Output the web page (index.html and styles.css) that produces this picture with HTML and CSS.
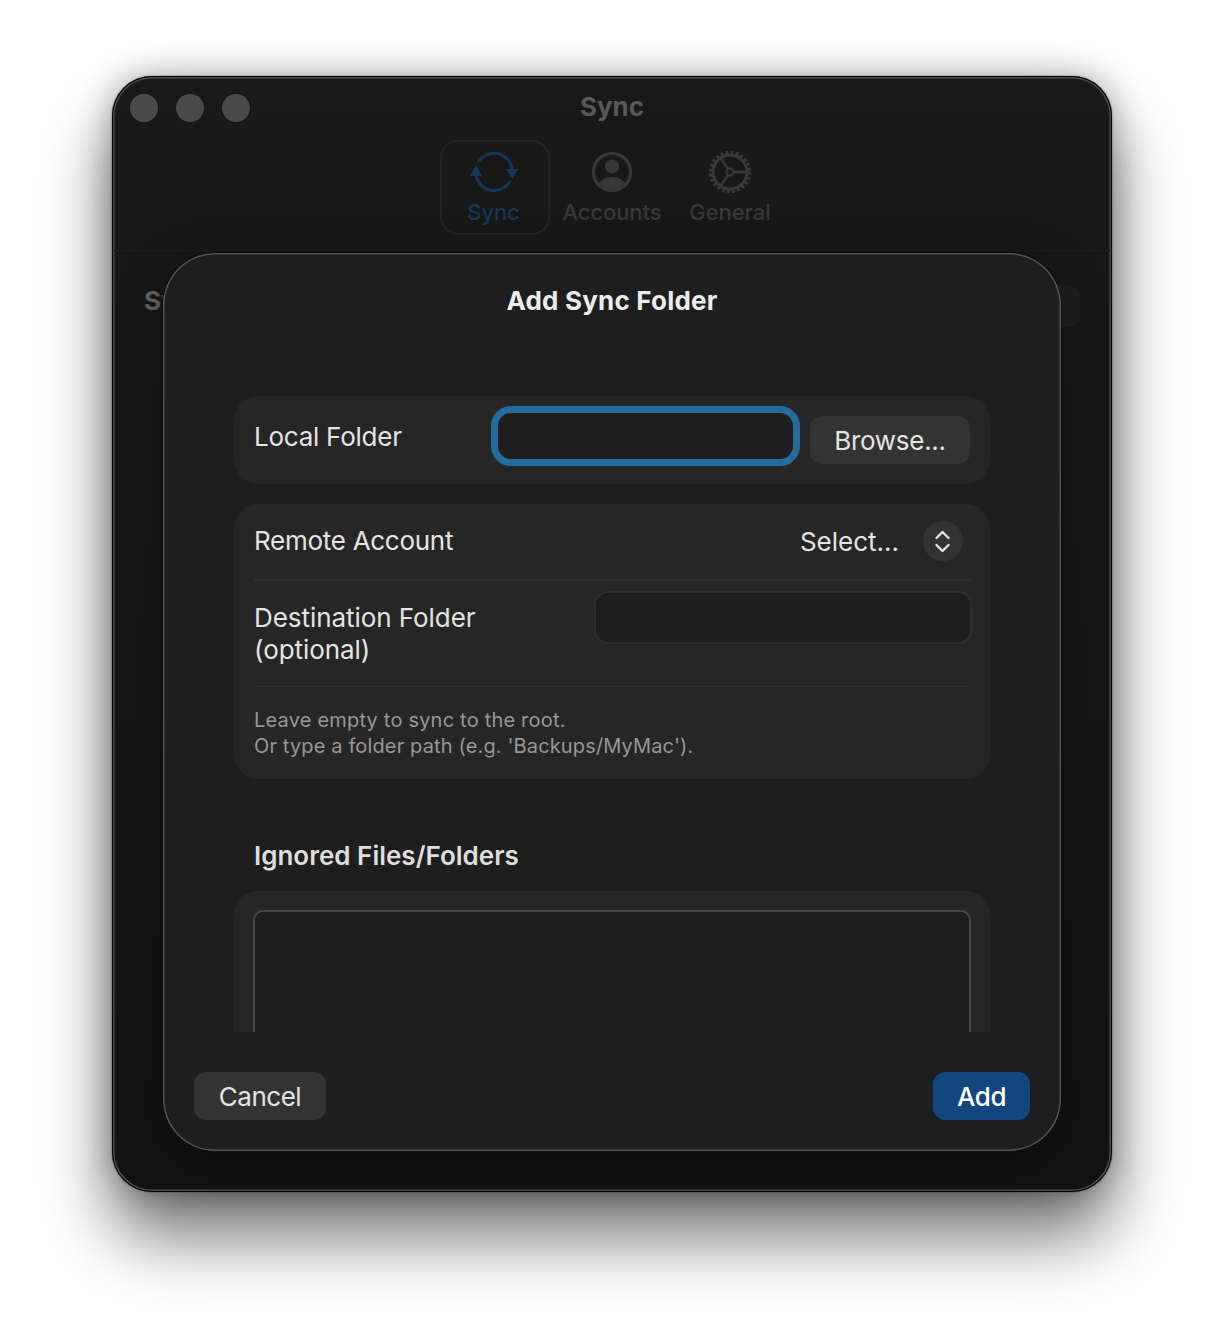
FILE: index.html
```
<!DOCTYPE html>
<html lang="en">
<head>
<meta charset="utf-8">
<title>Add Sync Folder</title>
<link rel="stylesheet" href="styles.css">
</head>
<body>
<div class="window">
  <header class="titlebar">
    <div class="lights"><span class="light"></span><span class="light"></span><span class="light"></span></div>
    <div class="win-title">Sync</div>
  </header>
  <nav class="toolbar">
    <div class="tab tab-active">
      <svg class="tab-icon" width="52" height="44" viewBox="0 0 52 44" fill="none">
        <path d="M11 8.800A18.500 18.500 0 0 1 44 16" stroke="currentColor" stroke-width="3" stroke-linecap="round"/>
        <path d="M41.700 29.800A18.500 18.500 0 0 1 8 24" stroke="currentColor" stroke-width="3" stroke-linecap="round"/>
        <path d="M38 17h12.500L44 27Z M1.800 24h12.500L8 13Z" fill="currentColor"/>
      </svg>
      <span class="tab-label">Sync</span>
    </div>
    <div class="tab">
      <svg class="tab-icon" width="44" height="44" viewBox="0 0 44 44" fill="none">
        <circle cx="22" cy="22" r="18.500" stroke="currentColor" stroke-width="3"/>
        <circle cx="22" cy="16.500" r="7" fill="currentColor"/>
        <path d="M8.500 34C11 29 16 27 22 27s11 2 13.500 7A18.500 18.500 0 0 1 8.500 34Z" fill="currentColor"/>
      </svg>
      <span class="tab-label">Accounts</span>
    </div>
    <div class="tab">
      <svg class="tab-icon" width="44" height="44" viewBox="0 0 44 44" fill="none">
        <circle cx="22" cy="22" r="17" stroke="currentColor" stroke-width="3"/>
        <circle cx="22" cy="22" r="19.500" stroke="currentColor" stroke-width="3.500" stroke-dasharray="2.800 2.304"/>
        <circle cx="22" cy="22" r="3.500" stroke="currentColor" stroke-width="2"/>
        <path d="M25.500 22H39M20.200 19 11.500 6.500M20.200 25 11.500 37.500" stroke="currentColor" stroke-width="2.500"/>
      </svg>
      <span class="tab-label">General</span>
    </div>
  </nav>
  <div class="win-body">
    <div class="bg-heading">Sync Folders</div>
    <div class="bg-button"></div>
  </div>

  <section class="sheet">
    <h1 class="sheet-title">Add Sync Folder</h1>
    <div class="sheet-scroll">
      <div class="group group-local">
        <span class="row-label label-local">Local Folder</span>
        <div class="input-focus"></div>
        <button class="btn btn-browse">Browse...</button>
      </div>
      <div class="group group-remote">
        <div class="row row-account">
          <span class="row-label label-account">Remote Account</span>
          <div class="select">
            <span class="select-value">Select...</span>
            <span class="stepper">
              <svg width="16" height="24" viewBox="0.500 -0.500 16 24" fill="none">
                <path d="M2 8.500 8 2.500l6 6M2 15.500l6 6 6-6" stroke="currentColor" stroke-width="2.400" stroke-linecap="round" stroke-linejoin="round"/>
              </svg>
            </span>
          </div>
        </div>
        <div class="row row-dest">
          <span class="row-label dest-label">Destination Folder<br>(optional)</span>
          <div class="input-plain"></div>
        </div>
        <p class="hint"><span class="hint-first">Leave empty to sync to the root.</span><br>Or type a folder path (e.g. 'Backups/MyMac').</p>
      </div>
      <h2 class="section-title">Ignored Files/Folders</h2>
      <div class="group group-ignored">
        <div class="textarea"></div>
      </div>
    </div>
    <footer class="sheet-footer">
      <button class="btn btn-cancel">Cancel</button>
      <button class="btn btn-add">Add</button>
    </footer>
  </section>
</div>
</body>
</html>
```
FILE: styles.css
```
* { box-sizing: border-box; }

html, body { margin: 0; height: 100%; background: #fff; }

body {
  padding-top: 76px;
  font-family: Inter, "Liberation Sans", sans-serif;
  overflow: hidden;
  -webkit-font-smoothing: antialiased;
}

.window {
  position: relative;
  width: 1000px;
  height: 1116px;
  margin: 0 auto;
  border-radius: 40px;
  background: linear-gradient(#191919, #121212);
  box-shadow:
    inset 0 0 0 1px #000,
    inset 0 0 0 2.500px #4c4c4c,
    0 0 2px rgba(0, 0, 0, .6),
    0 44px 70px rgba(0, 0, 0, .55),
    0 0 34px rgba(0, 0, 0, .3);
}

.titlebar {
  position: relative;
  height: 64px;
  display: flex;
  align-items: center;
  justify-content: center;
}

.lights {
  position: absolute;
  left: 18px;
  top: 18px;
  display: flex;
  gap: 18px;
}

.light {
  width: 28px;
  height: 28px;
  border-radius: 50%;
  background: #4a4a4a;
}

.win-title {
  font-size: 26px;
  font-weight: 700;
  line-height: 32px;
  color: #585858;
  margin-top: -3px;
}

.toolbar {
  display: flex;
  justify-content: center;
  padding-left: 4.500px;
  height: 111px;
  border-bottom: 1px solid #1d1d1d;
}

.tab {
  width: 118px;
  height: 95px;
  display: flex;
  flex-direction: column;
  align-items: center;
  color: #383838;
  padding-top: 10px;
}

.tab-active {
  width: 110px;
  margin-right: 3.500px;
  padding-right: 2px;
  color: #16365a;
  border: 2px solid #232323;
  border-radius: 18px;
  background: #181818;
}

.tab-icon { flex: none; display: block; }

.tab-label {
  font-size: 22px;
  line-height: 28px;
  font-weight: 500;
  letter-spacing: -.1px;
  margin-top: 4px;
}

.tab-active .tab-label { margin-top: 2px; }

.win-body {
  position: relative;
  display: flex;
  justify-content: space-between;
  padding: 34px 32px 0 32px;
}

.bg-heading {
  font-size: 26px;
  font-weight: 700;
  line-height: 32px;
  color: #626262;
  white-space: nowrap;
}

.bg-button {
  width: 120px;
  height: 42px;
  border-radius: 12px;
  background: #1e1e1e;
}

.sheet {
  position: absolute;
  left: 51px;
  top: 177px;
  width: 898px;
  height: 898px;
  border-radius: 52px;
  background: #1e1e1e;
  box-shadow:
    inset 0 0 0 1.500px #535353,
    0 0 0 1px #0c0c0c,
    0 10px 50px rgba(0, 0, 0, .3);
  display: flex;
  flex-direction: column;
}

.sheet-title {
  margin: 32px 0 0;
  text-align: center;
  font-size: 26px;
  line-height: 32px;
  font-weight: 700;
  letter-spacing: .2px;
  color: #ececec;
}

.sheet-scroll {
  height: 715px;
  padding: 79px 71px 0;
  overflow: hidden;
  flex: none;
}

.group {
  background: #262626;
  border-radius: 24px;
}

.group-local {
  height: 88px;
  display: flex;
  align-items: flex-start;
  padding: 10px 20px 0;
}

.row-label {
  font-size: 26px;
  line-height: 32px;
  color: #e4e4e4;
  font-weight: 400;
}

.label-local {
  width: 237px;
  margin-top: 15px;
  letter-spacing: -.25px;
}

.label-account {
  margin-top: 4px;
  letter-spacing: -.28px;
}

.input-focus {
  width: 309px;
  height: 60px;
  border: 7px solid #236c9c;
  border-radius: 20px;
  background: #1e1e1e;
  flex: none;
}

.btn {
  font: inherit;
  font-size: 26px;
  line-height: 32px;
  height: 48px;
  border: 0;
  border-radius: 12px;
  background: #333;
  color: #e4e4e4;
  padding: 2px 0 0;
}

.btn-browse {
  width: 160px;
  margin: 10px 0 0 10px;
  letter-spacing: -.3px;
  flex: none;
}

.group-remote {
  margin-top: 20px;
  height: 275px;
  padding: 0 19px 0 20px;
}

.row { display: flex; justify-content: space-between; }

.row-account {
  height: 77px;
  border-bottom: 2px solid #2f2f2f;
  align-items: flex-start;
  padding-top: 17px;
  padding-right: 8px;
}

.select {
  display: flex;
  align-items: center;
  gap: 24px;
  height: 40px;
}

.select-value {
  font-size: 26px;
  line-height: 32px;
  padding-top: 2px;
  color: #e4e4e4;
}

.stepper {
  width: 40px;
  height: 40px;
  border-radius: 50%;
  background: #333;
  color: #e4e4e4;
  display: flex;
  align-items: center;
  justify-content: center;
}

.row-dest {
  height: 106px;
  border-bottom: 1.500px solid #2f2f2f;
  padding-top: 10px;
}

.dest-label {
  margin-top: 11px;
  letter-spacing: -.06px;
}

.input-plain {
  width: 378px;
  height: 53px;
  margin-right: -1px;
  border: 2px solid #2e2e2e;
  border-radius: 14px;
  background: #1e1e1e;
}

.hint {
  margin: 20px 0 0;
  font-size: 20px;
  line-height: 26px;
  letter-spacing: .14px;
  color: #979797;
}

.hint-first { letter-spacing: .2px; }

.section-title {
  margin: 61px 0 0 20px;
  font-size: 26px;
  line-height: 32px;
  font-weight: 600;
  color: #dedede;
}

.group-ignored {
  margin-top: 19px;
  height: 300px;
  padding: 19px 19px 0;
}

.textarea {
  height: 300px;
  border: 2px solid #454545;
  border-radius: 10px;
  background: #1e1e1e;
}

.sheet-footer {
  display: flex;
  justify-content: space-between;
  padding: 40px 31px 0;
}

.btn-cancel {
  width: 132px;
  letter-spacing: -.5px;
}

.btn-add {
  width: 97px;
  background: #12467f;
  color: #fff;
  font-weight: 500;
  letter-spacing: -.4px;
}
```
